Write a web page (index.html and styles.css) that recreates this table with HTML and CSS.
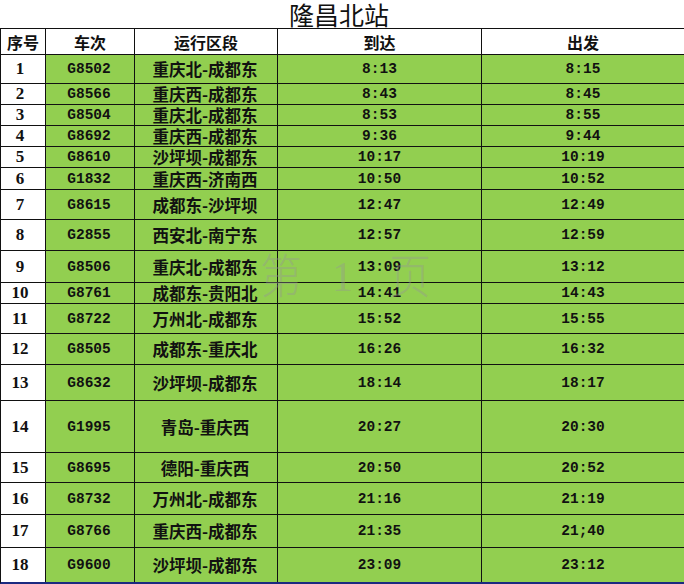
FILE: index.html
```html
<!DOCTYPE html>
<html lang="zh">
<head>
<meta charset="utf-8">
<title>隆昌北站</title>
<link rel="stylesheet" href="styles.css">
</head>
<body>
<div class="page">
  <h1 class="title">隆昌北站</h1>
  <div class="grid">
    <div class="hd">序号</div><div class="hd">车次</div><div class="hd">运行区段</div><div class="hd">到达</div><div class="hd">出发</div>
    <div class="no">1</div><div class="code">G8502</div><div class="route">重庆北-成都东</div><div class="time">8:13</div><div class="time">8:15</div>
    <div class="no">2</div><div class="code">G8566</div><div class="route">重庆西-成都东</div><div class="time">8:43</div><div class="time">8:45</div>
    <div class="no">3</div><div class="code">G8504</div><div class="route">重庆北-成都东</div><div class="time">8:53</div><div class="time">8:55</div>
    <div class="no">4</div><div class="code">G8692</div><div class="route">重庆西-成都东</div><div class="time">9:36</div><div class="time">9:44</div>
    <div class="no">5</div><div class="code">G8610</div><div class="route">沙坪坝-成都东</div><div class="time">10:17</div><div class="time">10:19</div>
    <div class="no">6</div><div class="code">G1832</div><div class="route">重庆西-济南西</div><div class="time">10:50</div><div class="time">10:52</div>
    <div class="no">7</div><div class="code">G8615</div><div class="route">成都东-沙坪坝</div><div class="time">12:47</div><div class="time">12:49</div>
    <div class="no">8</div><div class="code">G2855</div><div class="route">西安北-南宁东</div><div class="time">12:57</div><div class="time">12:59</div>
    <div class="no">9</div><div class="code">G8506</div><div class="route">重庆北-成都东</div><div class="time">13:09</div><div class="time">13:12</div>
    <div class="no">10</div><div class="code">G8761</div><div class="route">成都东-贵阳北</div><div class="time">14:41</div><div class="time">14:43</div>
    <div class="no">11</div><div class="code">G8722</div><div class="route">万州北-成都东</div><div class="time">15:52</div><div class="time">15:55</div>
    <div class="no">12</div><div class="code">G8505</div><div class="route">成都东-重庆北</div><div class="time">16:26</div><div class="time">16:32</div>
    <div class="no">13</div><div class="code">G8632</div><div class="route">沙坪坝-成都东</div><div class="time">18:14</div><div class="time">18:17</div>
    <div class="no">14</div><div class="code">G1995</div><div class="route">青岛-重庆西</div><div class="time">20:27</div><div class="time">20:30</div>
    <div class="no">15</div><div class="code">G8695</div><div class="route">德阳-重庆西</div><div class="time">20:50</div><div class="time">20:52</div>
    <div class="no">16</div><div class="code">G8732</div><div class="route">万州北-成都东</div><div class="time">21:16</div><div class="time">21:19</div>
    <div class="no">17</div><div class="code">G8766</div><div class="route">重庆西-成都东</div><div class="time">21:35</div><div class="time">21;40</div>
    <div class="no">18</div><div class="code">G9600</div><div class="route">沙坪坝-成都东</div><div class="time">23:09</div><div class="time">23:12</div>
  </div>
  <div class="watermark"><span class="wm-ch">第</span><span class="wm-one">1</span><span class="wm-ch">页</span></div>
</div>
</body>
</html>
```

FILE: styles.css
```css
* { box-sizing: border-box; }
html, body { margin: 0; padding: 0; background: #ffffff; }
.page {
  position: relative;
  width: 684px;
  height: 584px;
  overflow: hidden;
}
.title {
  margin: 0;
  height: 28px;
  padding-right: 6px;
  text-align: center;
  font-family: "Noto Sans CJK SC", sans-serif;
  font-weight: 400;
  font-size: 25px;
  line-height: 28px;
  color: #111;
}
.grid {
  display: grid;
  grid-template-columns: 44px 88px 142px 203px 1fr;
  grid-template-rows: 25px 28px 20px 20px 20px 20px 21px 29px 30px 31px 20px 29px 30px 35px 51px 29px 31px 32px 34px;
  gap: 1px;
  background: #111;
  border-top: 1px solid #111;
  border-left: 1px solid #111;
  border-bottom: 2px solid #1b2a80;
}
.grid > div {
  display: flex;
  align-items: center;
  justify-content: center;
  background: #92cf50;
  color: #111;
  white-space: nowrap;
}
.grid > .hd {
  background: #ffffff;
  font-family: "Noto Sans CJK SC", sans-serif;
  font-weight: 700;
  font-size: 16px;
}
.grid > .no {
  background: #ffffff;
  font-family: "Liberation Serif", serif;
  font-weight: 700;
  font-size: 17px;
  padding-right: 6px;
}
.code {
  font-family: "Liberation Mono", monospace;
  font-weight: 700;
  font-size: 14.5px;
  padding-right: 2px;
}
.route {
  font-family: "Noto Sans CJK SC", sans-serif;
  font-weight: 700;
  font-size: 16.5px;
  padding-right: 2px;
}
.time {
  font-family: "Liberation Mono", monospace;
  font-weight: 700;
  font-size: 14.5px;
}
.watermark {
  position: absolute;
  left: 260px;
  top: 248px;
  display: flex;
  align-items: baseline;
  font-size: 42px;
  line-height: 1.2;
  color: rgba(150, 150, 150, 0.4);
  pointer-events: none;
}
.wm-ch {
  font-family: "Noto Sans CJK SC", sans-serif;
  font-weight: 300;
  display: inline-block;
  transform: scaleY(1.12);
}
.wm-one {
  font-family: "Liberation Serif", serif;
  margin: 0 36px 0 30px;
}
```
